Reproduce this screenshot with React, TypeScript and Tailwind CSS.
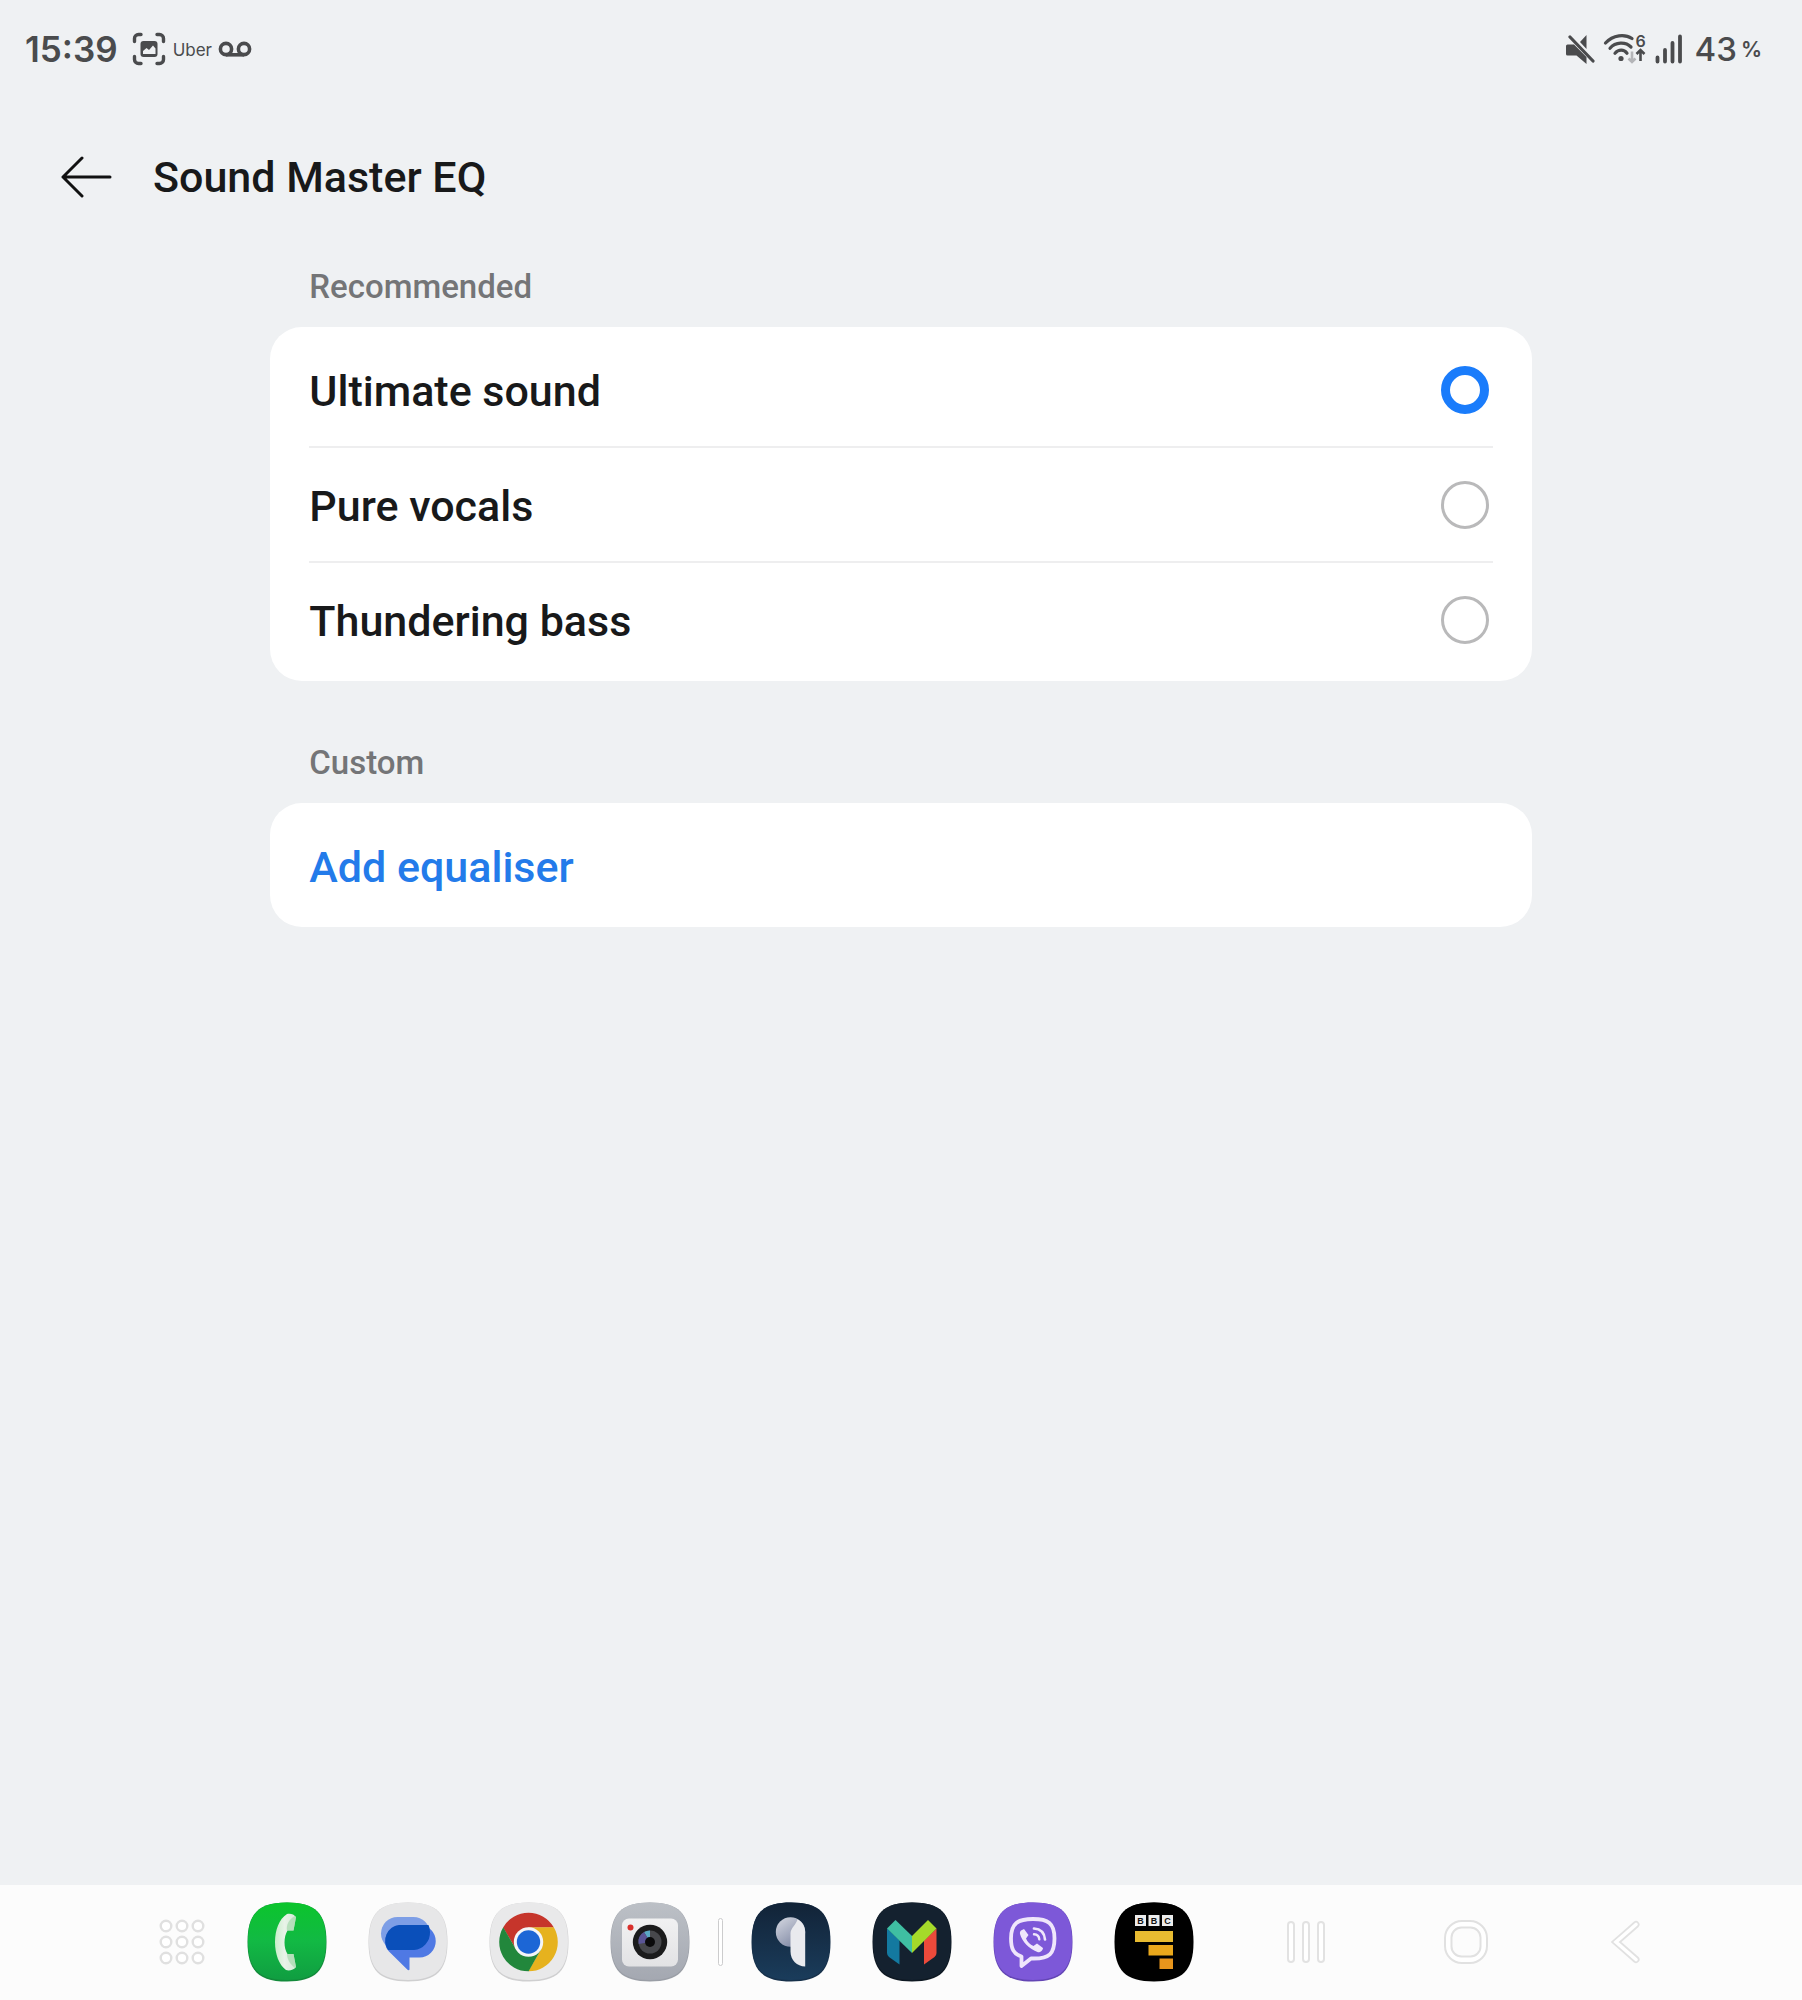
import { useState, type ReactNode } from "react";

const SQUIRCLE =
  "M40 .5C68.500 .5 79.500 11.500 79.500 40S68.500 79.500 40 79.500.5 68.500.5 40 11.500.5 40 .5Z";

function AppIcon({
  label,
  fill,
  edge,
  children,
}: {
  label: string;
  fill: string;
  edge?: string;
  children: ReactNode;
}) {
  return (
    <button type="button" aria-label={label} className="size-20 shrink-0">
      <svg viewBox="0 0 80 80" className="size-full" aria-hidden="true">
        <path d={SQUIRCLE} fill={edge ?? fill} />
        <path d={SQUIRCLE} fill={fill} transform="translate(.5 0) scale(.987 .98)" />
        {children}
      </svg>
    </button>
  );
}

function StatusBar() {
  return (
    <header className="flex h-[98px] items-center justify-between pl-[25px] pr-10 font-['Inter'] text-[#4a4b4d]">
      <div className="flex items-center">
        <time className="text-[35px] font-semibold leading-10">15:39</time>
        <svg viewBox="0 0 34 34" className="ml-3.5 size-[34px]" aria-hidden="true">
          <g fill="none" stroke="currentColor" strokeWidth="3.400" strokeLinecap="round">
            <path d="M2.500 9.500V6.500a4 4 0 0 1 4-4h2.500M25 2.500h2.500a4 4 0 0 1 4 4v3M31.500 24.500v3a4 4 0 0 1-4 4H25M9 31.500H6.500a4 4 0 0 1-4-4v-3" />
          </g>
          <rect x="8.500" y="9" width="17" height="16" rx="3" fill="currentColor" />
          <path d="M11 22v-3l3.500-3 2.500 2 4-4.500 2.500 3V22Z" fill="#eff1f3" />
        </svg>
        <span className="ml-[7px] pt-0.5 text-[17px] leading-6">Uber</span>
        <svg viewBox="0 0 34 18" className="ml-1.5 mt-0.5 h-[18px] w-[34px]" aria-hidden="true">
          <g fill="none" stroke="currentColor" strokeWidth="3.600">
            <circle cx="8" cy="8" r="5.600" />
            <circle cx="26" cy="8" r="5.600" />
            <path d="M8 13.800h18" />
          </g>
        </svg>
      </div>
      <div className="flex items-center">
        <svg viewBox="0 0 30 32" className="h-8 w-[30px]" aria-hidden="true">
          <path d="M2.500 11.500H9L21.500 24v7L11.500 22.500h-9A1.500 1.500 0 0 1 1 21v-8a1.500 1.500 0 0 1 1.500-1.500ZM21.500 2v14L15 9Z" fill="currentColor" />
          <path d="M5 4l23 24" stroke="currentColor" strokeWidth="3.200" strokeLinecap="round" />
        </svg>
        <svg viewBox="0 -4 48 40" className="ml-2 h-10 w-12" aria-hidden="true">
          <g fill="none" stroke="currentColor" strokeWidth="3.200" strokeLinecap="round">
            <path d="M2.500 10C10 1.500 22 .8 29 5.500" />
            <path d="M7 15.200C12.500 9 22.500 8.500 28 14" />
            <path d="M12 20.200c3.500-4 9-4 12 0" />
          </g>
          <circle cx="18" cy="25.500" r="2.600" fill="currentColor" />
          <path d="M29 18.500v10M25.500 25.500l3.500 3.500 3.500-3.500" fill="none" stroke="#b4b5b8" strokeWidth="2.600" />
          <path d="M37.500 28v-11M33.500 21l4-4 4 4" fill="none" stroke="currentColor" strokeWidth="2.600" />
          <text x="32.500" y="13.500" fontSize="16" fontWeight="600" fill="currentColor">6</text>
        </svg>
        <svg viewBox="0 0 28 32" className="ml-1 h-8 w-7" aria-hidden="true">
          <path d="M2.500 24.500v4M10 17v11.500M17.500 10v18.500M25 3.500v25" stroke="currentColor" strokeWidth="3.800" strokeLinecap="round" />
        </svg>
        <span className="ml-3 text-[33px] font-medium leading-10">43</span>
        <span className="ml-1 pt-0.5 text-[21px] font-semibold leading-10">%</span>
      </div>
    </header>
  );
}

const PRESETS = ["Ultimate sound", "Pure vocals", "Thundering bass"];

function Presets() {
  const [selected, setSelected] = useState(PRESETS[0]);
  return (
    <fieldset>
      <legend className="px-[39px] text-[33px] font-medium leading-10 text-[#747577]">Recommended</legend>
      <div className="mt-5 rounded-[32px] bg-white px-[39px] pb-[3px] pt-1.5">
        {PRESETS.map((name) => (
          <label
            key={name}
            className="flex h-[115px] cursor-pointer items-center justify-between border-b-2 border-[#eeeeef] pr-1 last:border-transparent"
          >
            <span className="pt-0.5 text-[43px] font-medium leading-[52px] text-[#18191a]">{name}</span>
            <input
              type="radio"
              name="preset"
              checked={selected === name}
              onChange={() => setSelected(name)}
              className="size-12 appearance-none rounded-full border-3 border-[#b9b9ba] bg-white checked:border-9 checked:border-[#1a7cfb]"
            />
          </label>
        ))}
      </div>
    </fieldset>
  );
}

function Dock() {
  return (
    <footer className="flex h-[115px] items-center justify-center bg-[#fcfcfc] pb-px pl-[45px]">
      <button type="button" aria-label="All apps" className="flex w-20 shrink-0 justify-center">
        <svg viewBox="0 0 46 46" className="size-[46px]" fill="#fff" stroke="#e0e0e0" strokeWidth="2.400" aria-hidden="true">
          {[7, 23, 39].map((cy) =>
            [7, 23, 39].map((cx) => <circle key={`${cx}-${cy}`} cx={cx} cy={cy} r="5.300" />),
          )}
        </svg>
      </button>

      <div className="ml-[25px] flex w-[443px] shrink-0 justify-between">
        <AppIcon label="Phone" fill="url(#phoneBg)" edge="#128a3a">
          <defs>
            <linearGradient id="phoneBg" x1="0" y1="0" x2="0" y2="1">
              <stop offset="0" stopColor="#0bc52c" />
              <stop offset=".5" stopColor="#12b944" />
              <stop offset="1" stopColor="#109d41" />
            </linearGradient>
            <linearGradient id="handset" x1="0" y1="0" x2="1" y2="0">
              <stop offset="0" stopColor="#c9eecb" />
              <stop offset=".45" stopColor="#e8f3e8" />
              <stop offset="1" stopColor="#d5ead8" />
            </linearGradient>
          </defs>
          <path d="M40 12C32 17 28 28 28 40s4 23 11 28c3 1 8 0 10-3L46.500 52h-6c-4-6-4-17 0-23.500h6L49 15c-2-3-6-4-9-3Z" fill="url(#handset)" />
          <path d="M40 28.500C39 23 42 17 48 14l1 1.500-2.500 13ZM40 52c0 5 3 10 8 14l1-1-2.500-13Z" fill="#a5d9ad" opacity=".7" />
        </AppIcon>
        <AppIcon label="Messages" fill="#e7e7e8" edge="#cfcfd0">
          <rect x="13" y="15" width="49" height="33" rx="16.500" fill="#7d9ee6" />
          <path d="M33 23h18.500a16 16 0 0 1 0 32.500H41.500V67c0 1.500-1 1.500-2 .8L21 49.500A16 16 0 0 1 33 23Z" fill="#4f79e4" />
          <path d="M31 23h29.500a17 17 0 0 1 1.500 7A17.500 17.500 0 0 1 46 48H20A16 16 0 0 1 31 23Z" fill="#0a4fba" />
        </AppIcon>
        <AppIcon label="Chrome" fill="#e9e9ea" edge="#cfcfd0">
          <g transform="translate(39.500 40)">
            {[
              ["#c6352b", 0],
              ["#e6b21e", 120],
              ["#22873c", 240],
            ].map(([color, angle]) => (
              <path
                key={color}
                d="M25.400-14.500A29.200 29.200 0 0 0-25.400-14.500L-12.560 7.250 0 0V-14.500Z"
                fill={String(color)}
                transform={`rotate(${angle})`}
              />
            ))}
            <circle r="14.700" fill="#f4f5f7" />
            <circle r="11.700" fill="#1c66d6" />
          </g>
        </AppIcon>
        <AppIcon label="Camera" fill="url(#cameraBg)" edge="#9a9ea6">
          <defs>
            <linearGradient id="cameraBg" x1="0" y1="0" x2="0" y2="1">
              <stop offset="0" stopColor="#bcc0c6" />
              <stop offset="1" stopColor="#a4a8b1" />
            </linearGradient>
            <linearGradient id="cameraBody" x1="0" y1="0" x2="0" y2="1">
              <stop offset="0" stopColor="#f1f1f2" />
              <stop offset="1" stopColor="#e2e2e4" />
            </linearGradient>
          </defs>
          <rect x="12" y="16.500" width="56" height="48" rx="7" fill="url(#cameraBody)" />
          <circle cx="20.500" cy="25.500" r="3" fill="#d9302c" />
          <circle cx="40" cy="40" r="17.200" fill="#1b1b1c" />
          <circle cx="40" cy="40" r="11.500" fill="#47484c" />
          <path d="M40 40V28.500A11.500 11.500 0 0 0 34 30Z" fill="#5aa9c4" />
          <path d="M40 40L34 30A11.500 11.500 0 0 0 28.600 42Z" fill="#5a5596" />
          <circle cx="40" cy="40" r="5" fill="#0a0a0b" />
        </AppIcon>
      </div>

      <div className="mx-7 h-12 w-[5px] shrink-0 rounded-full border border-[#cccccd] bg-white" />

      <div className="flex w-[443px] shrink-0 justify-between">
        <AppIcon label="Quick reader" fill="url(#navyBg)" edge="#16304a">
          <defs>
            <linearGradient id="navyBg" x1="0" y1="0" x2="0" y2="1">
              <stop offset="0" stopColor="#122337" />
              <stop offset="1" stopColor="#1a3c5b" />
            </linearGradient>
            <linearGradient id="disc" x1="0" y1="0" x2=".7" y2="1">
              <stop offset="0" stopColor="#d6d9e2" />
              <stop offset="1" stopColor="#7e87a3" />
            </linearGradient>
          </defs>
          <circle cx="39.500" cy="30" r="14.700" fill="url(#disc)" />
          <path d="M54.200 30v34.500C46 64.500 39.500 58 39.500 49.500V31C40 25.500 45 23 46.500 17.200 51 19.500 54.200 24 54.200 30Z" fill="#e9eaee" />
        </AppIcon>
        <AppIcon label="Monzo" fill="#14212f" edge="#0e1822">
          <path d="M15 26.500l12.500 12V62.500L17 55a5 5 0 0 1-2-4Z" fill="#1379a0" />
          <path d="M64.500 26.500L52 38.500v24L62.500 55a5 5 0 0 0 2-4Z" fill="#ec4a3b" />
          <path d="M23.500 18L15 26.500l25 24.500V34Z" fill="#3fbfa2" />
          <path d="M56 18l8.500 8.500L40 51V34Z" fill="#a5da2a" />
        </AppIcon>
        <AppIcon label="Viber" fill="#7d58d8" edge="#6345b4">
          <g fill="none" stroke="#efe6fb" strokeLinecap="round" strokeLinejoin="round">
            <path d="M40 17c15 0 21.500 4 21.500 19.500S56 56.500 41 56.500h-3L28.500 64v-9.500C20.500 52 18 46.500 18 36.500 18 21 25 17 40 17Z" strokeWidth="3.800" />
            <path d="M41 26.500c6.500.5 10.500 4.500 11 11" strokeWidth="2.700" />
            <path d="M41 32.300c3 .2 5 2 5.300 5" strokeWidth="2.400" />
          </g>
          <path d="M28 28.500l3-1.500 4.500 6-2.500 3.500c1.500 3.500 4 6 7.500 7.500l3.500-2.500 6 4.500c0 2-2.500 4.500-5 4.300C36 47 29 39.500 27 32c-.2-1.500 0-2.800 1-3.500Z" fill="#efe6fb" />
        </AppIcon>
        <AppIcon label="BBC" fill="#000">
          <g fill="#ececec">
            <rect x="21" y="13" width="11" height="11" />
            <rect x="34.500" y="13" width="11" height="11" />
            <rect x="48" y="13" width="11" height="11" />
          </g>
          <g fontFamily="Liberation Sans" fontSize="9" fontWeight="700" textAnchor="middle" fill="#111">
            <text x="26.500" y="22">B</text>
            <text x="40" y="22">B</text>
            <text x="53.500" y="22">C</text>
          </g>
          <path d="M21 29h38v11H21Z" fill="#e8bb31" />
          <path d="M34.500 43H59v10.500H34.500Z" fill="#eaa81c" />
          <path d="M45.500 56.500H59V67H45.500Z" fill="#e8951c" />
        </AppIcon>
      </div>

      <nav className="ml-8 flex shrink-0" aria-label="System navigation">
        <button type="button" aria-label="Recents" className="flex w-40 items-center justify-center gap-[7px]">
          <span className="h-[42px] w-2 rounded-full border-2 border-[#e2e2e2] bg-white" />
          <span className="h-[42px] w-2 rounded-full border-2 border-[#e2e2e2] bg-white" />
          <span className="h-[42px] w-2 rounded-full border-2 border-[#e2e2e2] bg-white" />
        </button>
        <button type="button" aria-label="Home" className="flex w-40 items-center justify-center">
          <svg viewBox="0 0 44 44" className="size-11" stroke="#e1e1e1" strokeWidth="2" aria-hidden="true">
            <rect x="1" y="1" width="42" height="42" rx="17" fill="#fff" />
            <rect x="7.500" y="7.500" width="29" height="29" rx="10" fill="#fcfcfc" />
          </svg>
        </button>
        <button type="button" aria-label="Back" className="flex w-40 items-center justify-center">
          <svg viewBox="0 0 30 44" className="h-11 w-[30px]" fill="none" strokeLinecap="round" aria-hidden="true">
            <path d="M25 4.500L5 22l20 17.500" stroke="#e1e1e1" strokeWidth="7" />
            <path d="M25 4.500L5 22l20 17.500" stroke="#fff" strokeWidth="3.600" />
          </svg>
        </button>
      </nav>
    </footer>
  );
}

export default function App() {
  return (
    <div className="flex min-h-screen flex-col bg-[#eff1f3] font-['Roboto',sans-serif]">
      <StatusBar />
      <div className="flex h-[158px] items-center pl-[61px]">
        <button type="button" aria-label="Back" className="mr-10">
          <svg viewBox="0 0 52 42" className="h-[42px] w-[52px]" fill="none" stroke="#111" strokeWidth="3" strokeLinecap="round" strokeLinejoin="round" aria-hidden="true">
            <path d="M21 2L2 21l19 19M2 21h47" />
          </svg>
        </button>
        <h1 className="text-[43px] font-medium leading-[52px] text-[#18191a]">Sound Master EQ</h1>
      </div>
      <main className="mx-auto w-[70%] grow pt-[11px]">
        <Presets />
        <section className="mt-[62px]">
          <h2 className="px-[39px] text-[33px] font-medium leading-10 text-[#747577]">Custom</h2>
          <button
            type="button"
            className="mt-5 flex h-[124px] w-full items-center rounded-[32px] bg-white px-[39px] pt-1 text-[43px] font-medium leading-[52px] text-[#237bea]"
          >
            Add equaliser
          </button>
        </section>
      </main>
      <Dock />
    </div>
  );
}
